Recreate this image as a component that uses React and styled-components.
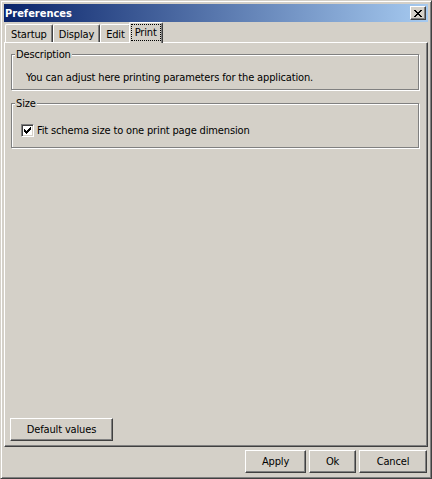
import React from "react";
import styled, { createGlobalStyle } from "styled-components";

const GlobalStyle = createGlobalStyle`
  html, body {
    margin: 0;
    padding: 0;
    background: #d4d0c8;
  }
  body {
    font-family: "DejaVu Sans Condensed", "Liberation Sans", sans-serif;
    font-size: 11px;
    letter-spacing: -0.15px;
    color: #000;
  }
`;

const Window = styled.div`
  width: 432px;
  height: 479px;
  box-sizing: border-box;
  display: flex;
  flex-direction: column;
  background: #d4d0c8;
  border: 1px solid;
  border-color: #d4d0c8 #404040 #404040 #d4d0c8;
  box-shadow: inset 1px 1px 0 #fff, inset -1px -1px 0 #808080;
  padding: 3px;
`;

const TitleBar = styled.div`
  height: 18px;
  flex: none;
  display: flex;
  align-items: center;
  justify-content: space-between;
  padding: 0 2px 0 1px;
  background: linear-gradient(to right, #0a246a, #a6caf0);
`;

const Title = styled.span`
  color: #fff;
  font-weight: bold;
  font-size: 11px;
  letter-spacing: 0;
`;

const CloseButton = styled.div`
  width: 16px;
  height: 14px;
  box-sizing: border-box;
  display: flex;
  align-items: center;
  justify-content: center;
  background: #d4d0c8;
  border: 1px solid;
  border-color: #fff #404040 #404040 #fff;
  box-shadow: inset -1px -1px 0 #808080;
  padding-right: 1px;
`;

const TabStrip = styled.div`
  height: 20px;
  flex: none;
  display: flex;
  align-items: flex-end;
  padding-left: 1px;
`;

const Tab = styled.div`
  position: relative;
  box-sizing: border-box;
  height: ${({ $active }) => ($active ? "21px" : "18px")};
  margin: ${({ $active }) => ($active ? "0 -2px -1px" : "0")};
  z-index: ${({ $active }) => ($active ? 1 : 0)};
  padding: ${({ $active }) => ($active ? "1px 1px 0 1px" : "1px 5px 0 5px")};
  display: flex;
  align-items: ${({ $active }) => ($active ? "stretch" : "center")};
  background: #d4d0c8;
  border-top: 1px solid #fff;
  border-left: 1px solid #fff;
  border-right: 1px solid #404040;
  border-top-left-radius: 2px;
  border-top-right-radius: 2px;
  box-shadow: inset -1px 0 0 #808080;
  white-space: nowrap;
`;

const FocusLabel = styled.span`
  display: flex;
  align-items: center;
  padding: 0 4px;
  margin-bottom: 2px;
  outline: 1px dotted #000;
  outline-offset: -1px;
`;

const TabPanel = styled.div`
  flex: 1;
  display: flex;
  flex-direction: column;
  background: #d4d0c8;
  border: 1px solid;
  border-color: #fff #404040 #404040 #fff;
  box-shadow: inset -1px -1px 0 #808080;
  padding: 5px 8px 5px 6px;
`;

const GroupBox = styled.fieldset`
  margin: ${({ $first }) => ($first ? "0" : "7px 0 0")};
  padding: 0;
  min-width: 0;
  height: ${({ $height }) => $height}px;
  box-sizing: border-box;
  border: 1px solid #808080;
  box-shadow: inset 1px 1px 0 #fff, 1px 1px 0 #fff;
  display: flex;
  flex-direction: column;
`;

const Legend = styled.legend`
  margin-left: 3px;
  padding: 0 1px;
  background: #d4d0c8;
  line-height: 13px;
`;

const GroupText = styled.div`
  padding: 10px 0 0 14px;
`;

const CheckRow = styled.label`
  display: flex;
  align-items: center;
  gap: 3px;
  padding: 14px 0 0 9px;
`;

const CheckBox = styled.span`
  width: 13px;
  height: 13px;
  box-sizing: border-box;
  flex: none;
  display: flex;
  align-items: center;
  justify-content: center;
  background: #fff;
  border: 1px solid;
  border-color: #808080 #fff #fff #808080;
  box-shadow: inset 1px 1px 0 #404040, inset -1px -1px 0 #d4d0c8;
`;

const Spacer = styled.div`
  flex: 1;
`;

const Button = styled.button`
  width: ${({ $width }) => $width}px;
  height: 23px;
  box-sizing: border-box;
  padding: 0;
  margin: 0;
  font-family: inherit;
  font-size: 11px;
  letter-spacing: inherit;
  color: #000;
  background: #d4d0c8;
  border: 1px solid;
  border-color: #fff #404040 #404040 #fff;
  box-shadow: inset -1px -1px 0 #808080;
  border-radius: 0;
`;

const PanelButton = styled(Button)`
  align-self: flex-start;
  margin-left: -1px;
`;

const ButtonBar = styled.div`
  flex: none;
  display: flex;
  justify-content: flex-end;
  gap: 3px;
  padding: 3px 1px 2px 0;
`;

const CloseGlyph = () => (
  <svg width="8" height="7" viewBox="0 0 8 7" shapeRendering="crispEdges">
    <path
      fill="#000"
      d="M0 0h2v1H0zM6 0h2v1H6zM1 1h2v1H1zM5 1h2v1H5zM2 2h4v1H2zM3 3h2v1H3zM2 4h4v1H2zM1 5h2v1H1zM5 5h2v1H5zM0 6h2v1H0zM6 6h2v1H6z"
    />
  </svg>
);

const CheckGlyph = () => (
  <svg width="7" height="7" viewBox="0 0 7 7" shapeRendering="crispEdges">
    <path
      fill="#000"
      d="M6 0h1v1H6zM5 1h2v1H5zM0 2h1v1H0zM4 2h3v1H4zM0 3h2v1H0zM3 3h3v1H3zM0 4h5v1H0zM1 5h3v1H1zM2 6h1v1H2z"
    />
  </svg>
);

const tabs = ["Startup", "Display", "Edit", "Print"];

export default function App() {
  const active = "Print";
  return (
    <>
      <GlobalStyle />
      <Window>
        <TitleBar>
          <Title>Preferences</Title>
          <CloseButton>
            <CloseGlyph />
          </CloseButton>
        </TitleBar>
        <TabStrip>
          {tabs.map((t) =>
            t === active ? (
              <Tab key={t} $active>
                <FocusLabel>{t}</FocusLabel>
              </Tab>
            ) : (
              <Tab key={t}>{t}</Tab>
            )
          )}
        </TabStrip>
        <TabPanel>
          <GroupBox $first $height={42}>
            <Legend>Description</Legend>
            <GroupText>
              You can adjust here printing parameters for the application.
            </GroupText>
          </GroupBox>
          <GroupBox $height={51}>
            <Legend>Size</Legend>
            <CheckRow>
              <CheckBox>
                <CheckGlyph />
              </CheckBox>
              <span>Fit schema size to one print page dimension</span>
            </CheckRow>
          </GroupBox>
          <Spacer />
          <PanelButton $width={103}>Default values</PanelButton>
        </TabPanel>
        <ButtonBar>
          <Button $width={61}>Apply</Button>
          <Button $width={47}>Ok</Button>
          <Button $width={68}>Cancel</Button>
        </ButtonBar>
      </Window>
    </>
  );
}
